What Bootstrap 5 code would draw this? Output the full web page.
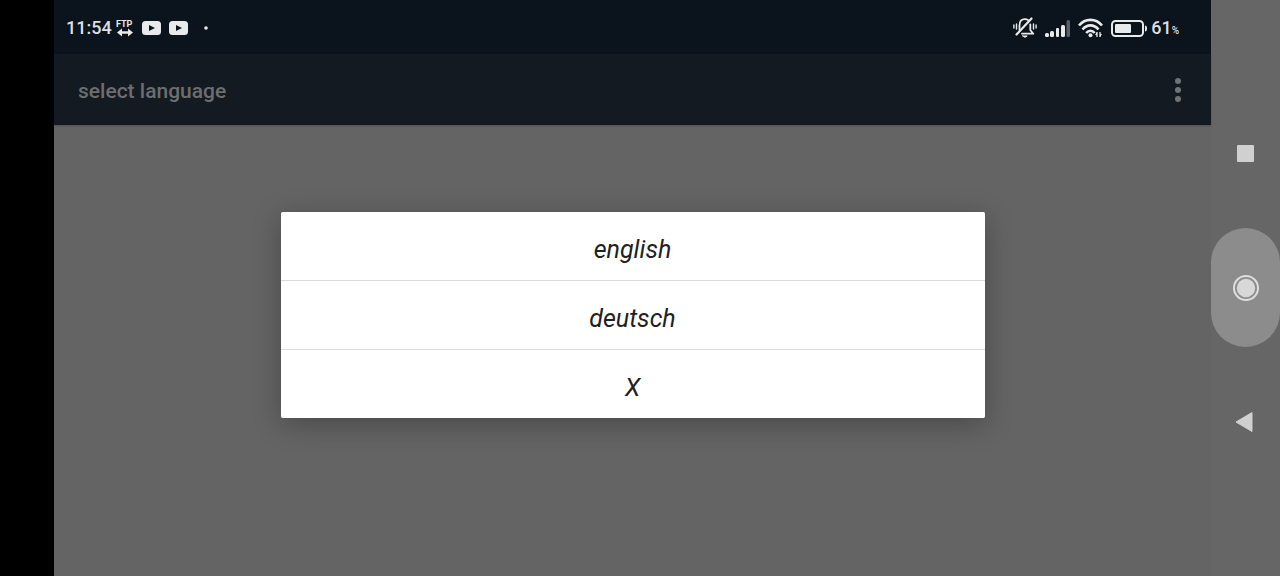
<!DOCTYPE html>
<html lang="en">
<head>
<meta charset="utf-8">
<meta name="viewport" content="width=device-width, initial-scale=1">
<title>select language</title>
<link href="https://cdn.jsdelivr.net/npm/bootstrap@5.3.0/dist/css/bootstrap.min.css" rel="stylesheet">
<style>
  body { font-family: Roboto, "Noto Sans", sans-serif; background: #646464; }
  svg { display: block; flex: none; }
  .cutout { width: 54px; background: #000; }
  .status-bar { height: 54px; padding: 2px 32px 0 12px; background: #0b131c; color: #dcdfe2; font-size: 18px; line-height: 24px; font-weight: 500; }
  .status-bar .unit { font-size: 10px; line-height: 12px; }
  .title-bar { height: 71px; padding: 2px 24px 0; background: #131a22; color: #6c6e70; box-shadow: 0 1px 2px rgba(0, 0, 0, .2); }
  .title-bar h1 { font-size: 21px; line-height: 24px; font-weight: 500; }
  .title-bar button { margin-bottom: 2px; }
  .language-dialog { width: 704px; max-width: 92%; border-radius: 2px; background: #fff; box-shadow: 0 6px 28px rgba(0, 0, 0, .28); }
  .language-dialog .list-group-item { height: 69px; padding: 8px 16px 0; border-color: #dadada; color: #212121; font-size: 25px; line-height: 32px; font-style: italic; }
  .language-dialog .list-group-item:last-child { height: 68px; }
  .system-nav { width: 69px; gap: 15px; padding-bottom: 1px; background: #666; }
  .system-nav button { height: 119px; border-radius: 35px; }
  .system-nav .pressed { background: #8c8c8c; }
</style>
</head>
<body>
<div class="d-flex vh-100 overflow-hidden">
  <div class="cutout flex-shrink-0"></div>

  <div class="d-flex flex-column flex-grow-1">
    <header class="status-bar d-flex align-items-center justify-content-between">
      <div class="d-flex align-items-center">
        <time>11:54</time>
        <svg class="ms-1" width="18" height="20" viewBox="0 0 18 20" fill="#e8eaec">
          <text x="0" y="9" font-size="9" font-weight="700" font-family="Roboto, sans-serif">FTP</text>
          <path d="M1 14.500l5-4v2.800h6v-2.800l5 4-5 4v-2.800H6v2.800z"/>
        </svg>
        <svg class="ms-2" width="19" height="14" viewBox="0 0 19 14"><rect width="19" height="14" rx="3.500" fill="#e8eaec"/><path d="M7 4l6 3-6 3z" fill="#0b131c"/></svg>
        <svg class="ms-2" width="19" height="14" viewBox="0 0 19 14"><rect width="19" height="14" rx="3.500" fill="#e8eaec"/><path d="M7 4l6 3-6 3z" fill="#0b131c"/></svg>
        <svg class="ms-3" width="4" height="4" viewBox="0 0 4 4"><circle cx="2" cy="2" r="1.8" fill="#e8eaec"/></svg>
      </div>
      <div class="d-flex align-items-center">
        <svg width="24" height="22" viewBox="0 0 24 22" fill="none" stroke="#e8eaec" stroke-width="1.800" stroke-linecap="round" stroke-linejoin="round">
          <path d="M6.500 13V8.500C6.500 4.500 8.500 2.200 12 2.200c1.200 0 2 .2 3 .8M17.300 7.500V13l3 3.700H9"/>
          <path d="M9.800 19h4.400q-2.200 2.600-4.400 0z" fill="#e8eaec" stroke-width="1"/>
          <path d="M3.500 17.500L18.500 1.500" stroke-width="2.200"/>
          <path d="M3.500 7v5M.9 8v3M20.500 7v5M23.100 8v3" stroke-width="1.400"/>
        </svg>
        <svg class="ms-2" width="25" height="17" viewBox="0 0 25 17" fill="#e8eaec">
          <rect y="13" width="4" height="4" rx="1.500"/><rect x="5" y="11" width="4" height="6" rx="1.500"/><rect x="11" y="8" width="3" height="9" rx="1"/><rect x="16" y="5" width="4" height="12" rx="1.500"/><rect x="21.500" width="3.500" height="17" rx="1.500" fill="#5b6065"/>
        </svg>
        <svg class="ms-2" width="25" height="20" viewBox="0 0 25 20" fill="none" stroke="#e8eaec" stroke-width="2.600">
          <path d="M1 7.500C7 0 18 0 24 7.500M4.500 11.500c4.500-5.500 11.500-5.500 16 0M8.200 15c2.500-3 6-3 8.500 0"/>
          <circle cx="12.500" cy="17.300" r="2" fill="#e8eaec" stroke="none"/>
          <path d="M19 14v5M22 14v5" stroke-width="1.300"/><path d="M17 17l2-3v3zM24 16l-2 3v-3z" fill="#e8eaec" stroke="none"/>
        </svg>
        <svg class="ms-2" width="36" height="17" viewBox="0 0 36 17">
          <rect x="1" y="1" width="31" height="15" rx="3.500" fill="none" stroke="#e8eaec" stroke-width="2"/>
          <rect x="4" y="4" width="16" height="9" rx="1" fill="#e8eaec"/><path d="M34 5.500q2 0 2 3t-2 3z" fill="#e8eaec"/>
        </svg>
        <span class="ms-1 d-flex align-items-baseline"><span>61</span><span class="unit">%</span></span>
      </div>
    </header>

    <div class="position-relative d-flex flex-column flex-grow-1">
      <nav class="title-bar d-flex align-items-center justify-content-between">
        <h1 class="m-0">select language</h1>
        <button type="button" class="btn p-0 border-0" aria-label="More options">
          <svg width="18" height="24" viewBox="0 0 18 24" fill="#717375"><circle cx="9" cy="3" r="3"/><circle cx="9" cy="12" r="3"/><circle cx="9" cy="21" r="3"/></svg>
        </button>
      </nav>
      <main class="position-absolute top-0 start-0 w-100 h-100 d-flex align-items-center justify-content-center">
        <div class="language-dialog list-group list-group-flush overflow-hidden" role="dialog" aria-label="select language">
          <button type="button" class="list-group-item list-group-item-action text-center">english</button>
          <button type="button" class="list-group-item list-group-item-action text-center">deutsch</button>
          <button type="button" class="list-group-item list-group-item-action text-center">X</button>
        </div>
      </main>
    </div>
  </div>

  <nav class="system-nav d-flex flex-column justify-content-center flex-shrink-0">
    <button type="button" class="btn p-0 border-0 d-flex align-items-center justify-content-center" aria-label="Recent apps">
      <svg width="17" height="17" viewBox="0 0 17 17"><rect width="17" height="17" rx="1" fill="#d0d0d0"/></svg>
    </button>
    <button type="button" class="btn pressed p-0 border-0 d-flex align-items-center justify-content-center" aria-label="Home">
      <svg width="26" height="26" viewBox="0 0 26 26"><circle cx="13" cy="13" r="12" fill="none" stroke="#dedede" stroke-width="2"/><circle cx="13" cy="13" r="9.200" fill="#d8d8d8"/></svg>
    </button>
    <button type="button" class="btn p-0 border-0 d-flex align-items-center justify-content-center" aria-label="Back">
      <svg class="me-1" width="18" height="20" viewBox="0 0 18 20"><path d="M1 10L17 .5v19z" fill="#d0d0d0" stroke="#d0d0d0" stroke-linejoin="round"/></svg>
    </button>
  </nav>
</div>
<script src="https://cdn.jsdelivr.net/npm/bootstrap@5.3.0/dist/js/bootstrap.bundle.min.js"></script>
</body>
</html>
